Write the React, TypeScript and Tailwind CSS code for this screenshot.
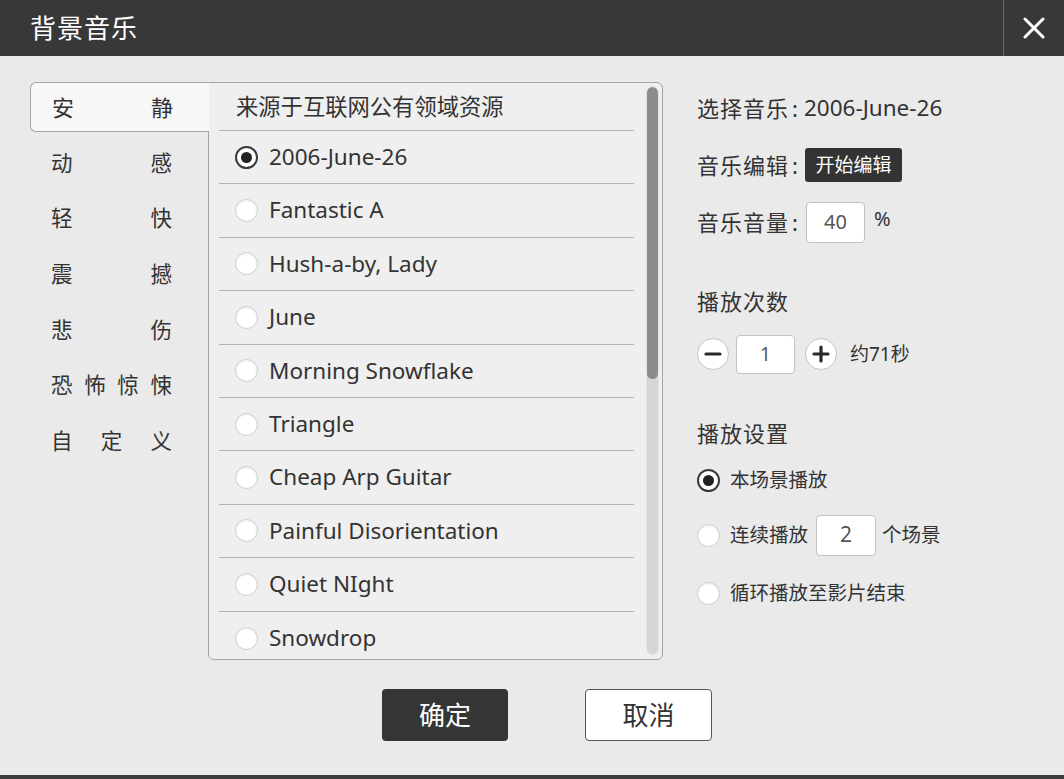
import React from "react";

const FONT = { fontFamily: '"Noto Sans", "Noto Sans CJK SC", sans-serif' };

const categories: string[][] = [
  ["动", "感"],
  ["轻", "快"],
  ["震", "撼"],
  ["悲", "伤"],
  ["恐", "怖", "惊", "悚"],
  ["自", "定", "义"],
];

const songs = [
  "2006-June-26",
  "Fantastic A",
  "Hush-a-by, Lady",
  "June",
  "Morning Snowflake",
  "Triangle",
  "Cheap Arp Guitar",
  "Painful Disorientation",
  "Quiet NIght",
  "Snowdrop",
];

function Radio({ checked }: { checked?: boolean }) {
  return checked ? (
    <span className="w-[23px] h-[23px] rounded-full border-2 border-[#3a3a3a] bg-white flex items-center justify-center shrink-0">
      <span className="w-[11px] h-[11px] rounded-full bg-[#222]" />
    </span>
  ) : (
    <span className="w-[23px] h-[23px] rounded-full border-[1.5px] border-[#cdcdcd] bg-white shadow-[inset_0_1px_2px_rgba(0,0,0,0.08)] shrink-0" />
  );
}

function CircleBtn({ plus }: { plus?: boolean }) {
  return (
    <span className="w-[32px] h-[32px] rounded-full border border-[#c4c4c4] bg-white flex items-center justify-center shrink-0">
      <svg width="18" height="18" viewBox="0 0 18 18">
        <path d="M2 9h14" stroke="#2a2a2a" strokeWidth="3.2" strokeLinecap="round" />
        {plus && <path d="M9 2v14" stroke="#2a2a2a" strokeWidth="3.2" strokeLinecap="round" />}
      </svg>
    </span>
  );
}

export default function App() {
  return (
    <div
      className="w-[1064px] h-[779px] flex flex-col bg-[#eaeaea] text-[#333] overflow-hidden"
      style={FONT}
    >
      {/* Title bar */}
      <div className="h-[56px] bg-[#383838] flex items-stretch shrink-0">
        <div className="flex-1 flex items-center pl-[30px] text-white text-[26px] tracking-[1px]">
          背景音乐
        </div>
        <div className="w-px bg-[#6e6e6e]" />
        <div className="w-[60px] flex items-center justify-center">
          <svg width="22" height="22" viewBox="0 0 22 22">
            <path d="M2 2L20 20M20 2L2 20" stroke="#fff" strokeWidth="3" strokeLinecap="round" />
          </svg>
        </div>
      </div>

      {/* Body */}
      <div className="flex-1 flex flex-col">
        <div className="flex pt-[26px] pl-[30px]">
          {/* Categories */}
          <div className="w-[178px] flex flex-col shrink-0">
            <div className="relative z-10 -mr-px h-[50px] flex items-center justify-between pl-[21px] pr-[36px] bg-[#f7f7f7] border-t border-l border-b border-[#a5a5a5] rounded-l-[6px] text-[22px] text-[#333]">
              <span>安</span>
              <span>静</span>
            </div>
            <div className="mt-[3px] flex flex-col">
              {categories.map((row, i) => (
                <div
                  key={i}
                  className="h-[55.7px] flex items-center justify-between pl-[21px] pr-[36px] text-[21.5px] text-[#333]"
                >
                  {row.map((c, j) => (
                    <span key={j}>{c}</span>
                  ))}
                </div>
              ))}
            </div>
          </div>

          {/* Song list panel */}
          <div className="w-[455px] h-[578px] border border-[#a5a5a5] rounded-[6px] rounded-tl-none bg-[#efefef] flex overflow-hidden shrink-0">
            <div className="pl-[10px] w-[425px] flex flex-col">
              <div className="h-[48px] shrink-0 border-b border-[#b3b3b3] flex items-center pl-[17px] text-[22.3px] text-[#333]">
                来源于互联网公有领域资源
              </div>
              {songs.map((s, i) => (
                <div
                  key={s}
                  className={
                    "h-[53.4px] shrink-0 flex items-center pl-[16px] " +
                    (i < songs.length - 1 ? "border-b border-[#b3b3b3]" : "")
                  }
                >
                  <Radio checked={i === 0} />
                  <span className="ml-[11px] text-[22.5px] text-[#333] leading-none">{s}</span>
                </div>
              ))}
            </div>
            <div className="ml-auto mr-[3px] mt-[3px] mb-[4px] w-[13px] rounded-full bg-[#d6d6d6] border border-[#e4e4e4] flex flex-col overflow-hidden">
              <div className="h-[292px] rounded-full bg-[#8c8c8c]" />
            </div>
          </div>

          {/* Right settings */}
          <div className="ml-[34px] flex flex-col text-[#333]">
            <div className="mt-[6px] h-[40px] flex items-center text-[22px] whitespace-nowrap">
              <span className="tracking-[1px]">选择音乐</span>
              <span className="ml-[3px]">:</span>
              <span className="ml-[6px] text-[22.5px]">2006-June-26</span>
            </div>
            <div className="mt-[17px] h-[40px] flex items-center text-[22px]">
              <span className="tracking-[1px]">音乐编辑</span>
              <span className="ml-[3px]">:</span>
              <span className="ml-[7px] h-[34px] w-[97px] rounded-[3px] bg-[#333] text-white text-[19px] flex items-center justify-center">
                开始编辑
              </span>
            </div>
            <div className="mt-[17px] h-[40px] flex items-center text-[22px]">
              <span className="tracking-[1px]">音乐音量</span>
              <span className="ml-[3px]">:</span>
              <span className="ml-[8px] h-[41px] w-[59px] rounded-[4px] bg-white border border-[#c2c2c2] text-[20px] text-[#555] flex items-center justify-center">
                40
              </span>
              <span className="ml-[9px] text-[20px] -mt-[6px]">%</span>
            </div>

            <div className="mt-[39px] h-[40px] flex items-center text-[22px] tracking-[1px]">播放次数</div>
            <div className="mt-[13px] h-[40px] flex items-center">
              <CircleBtn />
              <span className="ml-[7px] h-[39px] w-[59px] rounded-[4px] bg-white border border-[#c2c2c2] text-[19px] text-[#555] flex items-center justify-center">
                1
              </span>
              <span className="ml-[10px]">
                <CircleBtn plus />
              </span>
              <span className="ml-[13px] text-[19px]">约71秒</span>
            </div>

            <div className="mt-[39px] h-[40px] flex items-center text-[22px] tracking-[1px]">播放设置</div>
            <div className="mt-[7px] h-[40px] flex items-center">
              <Radio checked />
              <span className="ml-[10px] text-[19.5px]">本场景播放</span>
            </div>
            <div className="mt-[15px] h-[40px] flex items-center">
              <Radio />
              <span className="ml-[10px] text-[19.5px]">连续播放</span>
              <span className="ml-[8px] h-[41px] w-[60px] rounded-[4px] bg-white border border-[#c2c2c2] text-[21px] text-[#555] flex items-center justify-center">
                2
              </span>
              <span className="ml-[6px] text-[19.5px]">个场景</span>
            </div>
            <div className="mt-[18px] h-[40px] flex items-center">
              <Radio />
              <span className="ml-[10px] text-[19.5px]">循环播放至影片结束</span>
            </div>
          </div>
        </div>

        {/* Buttons */}
        <div className="mt-[29px] flex justify-center gap-[77px] pl-[30px]">
          <button className="w-[126px] h-[52px] rounded-[4px] bg-[#353535] text-white text-[26px] flex items-center justify-center">
            确定
          </button>
          <button className="w-[127px] h-[52px] rounded-[4px] bg-white border border-[#555] text-[#333] text-[26px] flex items-center justify-center">
            取消
          </button>
        </div>
        <div className="flex-1" />
      </div>
      <div className="h-[4px] bg-[#3c3c3c] shrink-0" />
    </div>
  );
}
